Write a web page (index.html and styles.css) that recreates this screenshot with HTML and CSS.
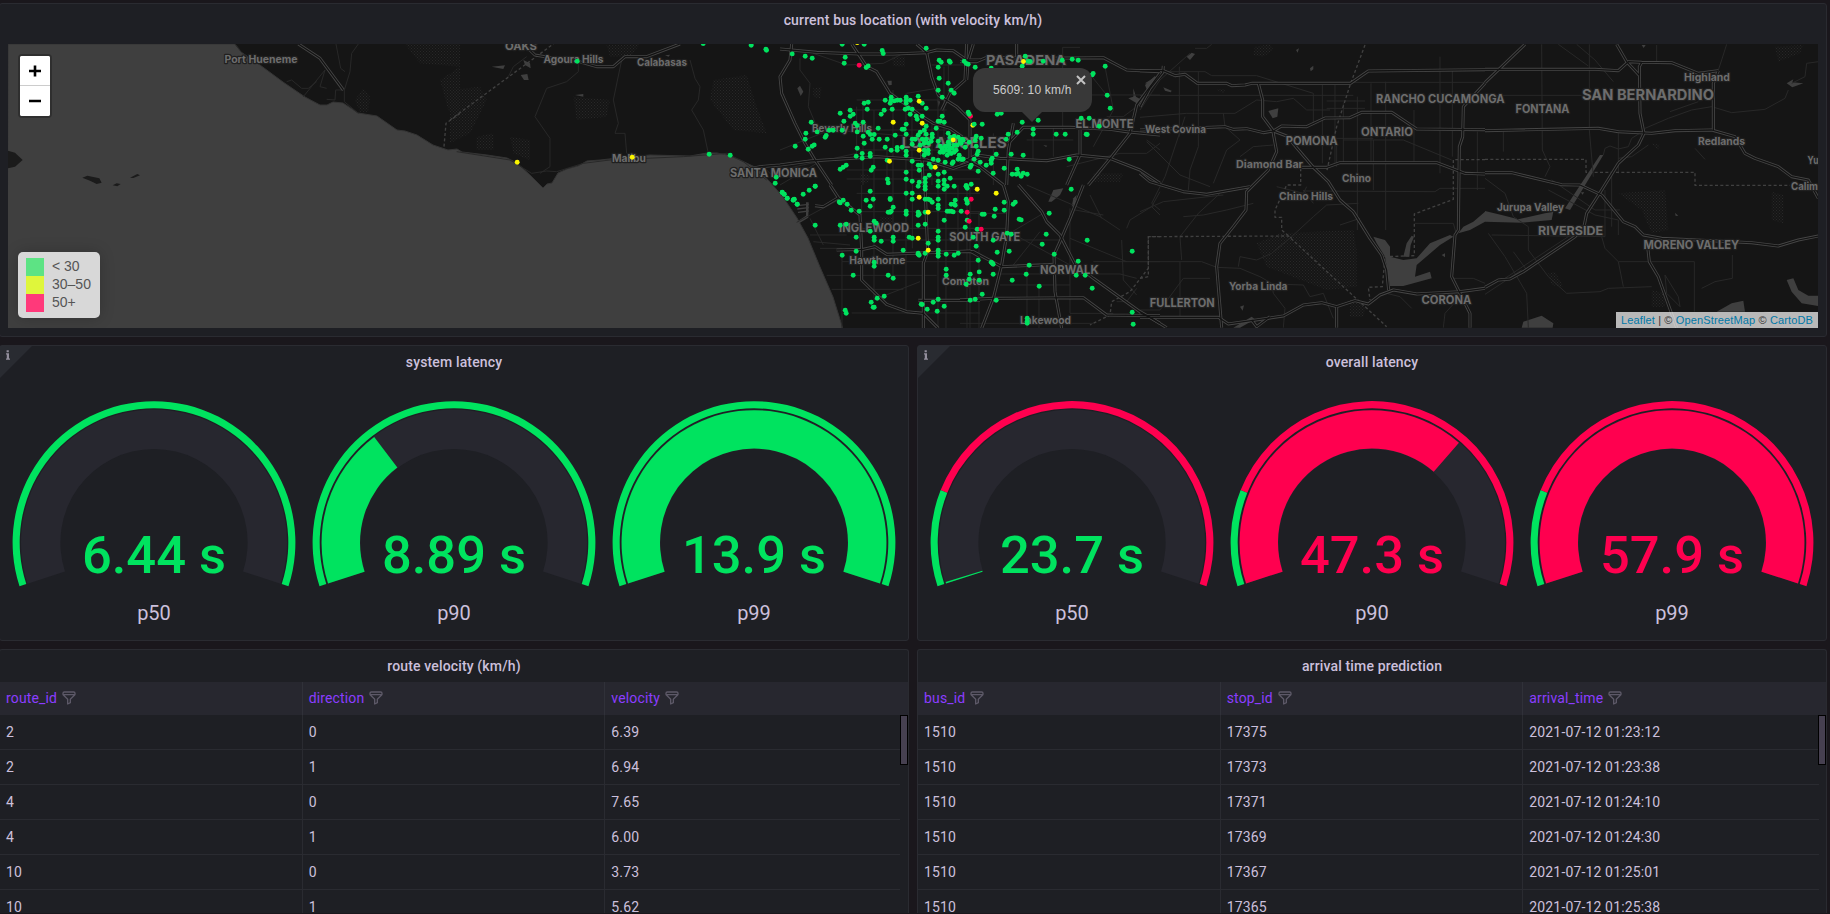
FILE: index.html
```html
<!DOCTYPE html>
<html lang="en">
<head>
<meta charset="utf-8">
<title>Bus dashboard</title>
<link rel="stylesheet" href="styles.css">
</head>
<body>
<svg class="defs" width="0" height="0" aria-hidden="true">
  <symbol id="filter" viewBox="0 0 24 24"><path d="M19,2H5A3,3,0,0,0,2,5V6.17a3,3,0,0,0,.25,1.2l0,.06a2.81,2.81,0,0,0,.59.86L9,14.41V21a1,1,0,0,0,.47.85A1,1,0,0,0,10,22a1,1,0,0,0,.45-.11l4-2A1,1,0,0,0,15,19V14.41l6.12-6.12a2.81,2.81,0,0,0,.59-.86l0-.06A3,3,0,0,0,22,6.17V5A3,3,0,0,0,19,2ZM13.29,13.29A1,1,0,0,0,13,14v4.38l-2,1V14a1,1,0,0,0-.29-.71L5.41,8H18.59ZM20,6H4V5A1,1,0,0,1,5,4H19a1,1,0,0,1,1,1Z"/></symbol>
  <symbol id="info" viewBox="0 0 32 32"><path class="corner-bg" d="M0 0H32L0 32Z"/><path class="corner-i" d="M6.6 4.2h2.2v2H6.6zM6 7.3h3v5.2h1V13.7H6v-1.2h.8v-4H6z"/></symbol>
</svg>
<main class="dashboard">
  <section class="panel">
    <h2 class="panel-title">current bus location (with velocity km/h)</h2>
    <div class="panel-body">
      <div class="map">
        <svg class="map-canvas" id="map" viewBox="8 44 1810 284"></svg>
        <div class="zoom-control">
          <button class="zoom-btn" aria-label="Zoom in"><svg viewBox="0 0 12 12"><path d="M0 6H12M6 .4V11.6"/></svg></button>
          <button class="zoom-btn" aria-label="Zoom out"><svg viewBox="0 0 12 12"><path d="M0 6H12"/></svg></button>
        </div>
        <div class="legend">
          <div class="legend-row"><i class="swatch slow"></i>&lt; 30</div>
          <div class="legend-row"><i class="swatch medium"></i>30–50</div>
          <div class="legend-row"><i class="swatch fast"></i>50+</div>
        </div>
        <div class="popup">5609: 10 km/h<svg class="popup-close" viewBox="0 0 10 10"><path d="M1 1L9 9M9 1L1 9"/></svg></div>
        <div class="attribution"><a>Leaflet</a> | © <a>OpenStreetMap</a> © <a>CartoDB</a></div>
      </div>
    </div>
  </section>
  <div class="row gauges-row">
    <section class="panel">
      <svg class="corner"><use href="#info"/></svg>
      <h2 class="panel-title">system latency</h2>
      <div class="panel-body gauges" data-gauges="6.44,8.89,13.9"></div>
    </section>
    <section class="panel">
      <svg class="corner"><use href="#info"/></svg>
      <h2 class="panel-title">overall latency</h2>
      <div class="panel-body gauges" data-gauges="23.7,47.3,57.9"></div>
    </section>
  </div>
  <div class="row tables-row">
    <section class="panel">
      <h2 class="panel-title">route velocity (km/h)</h2>
      <div class="table">
        <div class="thead"><div class="th">route_id<svg><use href="#filter"/></svg></div><div class="th">direction<svg><use href="#filter"/></svg></div><div class="th">velocity<svg><use href="#filter"/></svg></div></div>
        <div class="tr"><div class="td">2</div><div class="td">0</div><div class="td">6.39</div></div>
        <div class="tr"><div class="td">2</div><div class="td">1</div><div class="td">6.94</div></div>
        <div class="tr"><div class="td">4</div><div class="td">0</div><div class="td">7.65</div></div>
        <div class="tr"><div class="td">4</div><div class="td">1</div><div class="td">6.00</div></div>
        <div class="tr"><div class="td">10</div><div class="td">0</div><div class="td">3.73</div></div>
        <div class="tr"><div class="td">10</div><div class="td">1</div><div class="td">5.62</div></div>
        <div class="scroll-thumb"></div>
      </div>
    </section>
    <section class="panel">
      <h2 class="panel-title">arrival time prediction</h2>
      <div class="table">
        <div class="thead"><div class="th">bus_id<svg><use href="#filter"/></svg></div><div class="th">stop_id<svg><use href="#filter"/></svg></div><div class="th">arrival_time<svg><use href="#filter"/></svg></div></div>
        <div class="tr"><div class="td">1510</div><div class="td">17375</div><div class="td">2021-07-12 01:23:12</div></div>
        <div class="tr"><div class="td">1510</div><div class="td">17373</div><div class="td">2021-07-12 01:23:38</div></div>
        <div class="tr"><div class="td">1510</div><div class="td">17371</div><div class="td">2021-07-12 01:24:10</div></div>
        <div class="tr"><div class="td">1510</div><div class="td">17369</div><div class="td">2021-07-12 01:24:30</div></div>
        <div class="tr"><div class="td">1510</div><div class="td">17367</div><div class="td">2021-07-12 01:25:01</div></div>
        <div class="tr"><div class="td">1510</div><div class="td">17365</div><div class="td">2021-07-12 01:25:38</div></div>
        <div class="scroll-thumb"></div>
      </div>
    </section>
  </div>
</main>
<script src="app.js"></script>
</body>
</html>
```

FILE: styles.css
```css
* { box-sizing: border-box; }
body {
  margin: 0;
  height: 914px;
  overflow: hidden;
  background: #1a171c;
  color: #ccc0dc;
  font: 14px/20px Roboto, "Liberation Sans", sans-serif;
  letter-spacing: .15px;
}
.defs { position: absolute; }
.dashboard {
  display: flex;
  flex-direction: column;
  gap: 8px;
  width: 1828px;
  height: 913px;
  margin-left: -1px;
  padding-top: 3px;
}
.row { display: grid; grid-template-columns: 1fr 1fr; gap: 8px; }
.gauges-row { height: 296px; }
.tables-row { flex: 1; min-height: 0; }
.panel {
  position: relative;
  display: flex;
  flex-direction: column;
  min-width: 0;
  min-height: 0;
  border: 1px solid #2a2b31;
  border-radius: 3px;
  background: #1e1f24;
}
.tables-row .panel { border-bottom: 0; border-radius: 3px 3px 0 0; overflow: hidden; }
.panel-title {
  flex: none;
  margin: 0;
  height: 32px;
  font-size: 14px;
  font-weight: 500;
  line-height: 32px;
  text-align: center;
}
.panel-body { padding: 8px; }
.corner { position: absolute; top: 0; left: 0; width: 32px; height: 32px; }
.corner-bg { fill: #292b31; }
.corner-i { fill: #928e9c; }

/* Map */
.map { position: relative; height: 284px; overflow: hidden; background: #151515; letter-spacing: 0; }
.map-canvas { display: block; width: 100%; height: 100%; }
.water { fill: #3f3f3f; stroke: #343434; stroke-width: 1; }
.island { fill: #1b1b1b; }
.lake { fill: #3f3f3f; }
.wood { fill: url(#woodDots); }
.minor, .highway, .core, .border { fill: none; stroke-linejoin: round; }
.minor { stroke: #282828; stroke-width: 3; }
.highway { stroke: #464646; stroke-width: 9; }
.core { stroke: #121212; stroke-width: 3.8; }
.border { stroke: #404040; stroke-width: 4; stroke-dasharray: 9 7; }
.place {
  fill: #6d6d6d;
  stroke: #202020;
  stroke-width: 2.4px;
  stroke-linejoin: round;
  paint-order: stroke;
  font-family: Inter, "Open Sans", sans-serif;
  font-weight: 700;
}
.bus-slow { fill: #00e35f; }
.bus-medium { fill: #fbf500; }
.bus-fast { fill: #ff004f; }
.zoom-control {
  position: absolute;
  top: 10px;
  left: 10px;
  border: 2px solid rgba(0, 0, 0, .25);
  border-radius: 4px;
  background: #fff;
  background-clip: padding-box;
  overflow: hidden;
}
.zoom-btn {
  display: flex;
  align-items: center;
  justify-content: center;
  width: 30px;
  height: 30px;
  padding: 0;
  border: 0;
  background: #fff;
}
.zoom-btn:first-child { border-bottom: 1px solid #ccc; }
.zoom-btn svg { width: 12px; height: 12px; stroke: #000; stroke-width: 2.6; }
.legend {
  position: absolute;
  left: 10px;
  bottom: 10px;
  width: 82px;
  height: 66px;
  padding: 6px 8px;
  border-radius: 5px;
  background: rgba(255, 255, 255, .8);
  box-shadow: 0 0 15px rgba(0, 0, 0, .2);
  color: #555;
  font: 14px/17px "Liberation Sans", Arial, sans-serif;
}
.legend-row { display: flex; gap: 8px; height: 18px; white-space: nowrap; }
.swatch { width: 18px; height: 18px; }
.slow { background: #5de384; }
.medium { background: #dff63b; }
.fast { background: #ff397a; }
.popup {
  position: absolute;
  left: 965px;
  top: 24px;
  width: 119px;
  height: 44px;
  padding: 14px 0 0 20px;
  border-radius: 12px;
  background: #383838;
  color: #ccc;
  font: 12px/17px "Liberation Sans", Arial, sans-serif;
  letter-spacing: .2px;
}
.popup::after {
  content: "";
  position: absolute;
  top: 43px;
  left: 48px;
  border: 11px solid transparent;
  border-top: 11px solid #383838;
  border-bottom: 0;
}
.popup-close {
  position: absolute;
  top: 7px;
  right: 6px;
  width: 10px;
  height: 10px;
  stroke: #c3c3c3;
  stroke-width: 2;
}
.attribution {
  position: absolute;
  right: 0;
  bottom: 0;
  width: 202px;
  height: 16px;
  text-align: center;
  background: rgba(255, 255, 255, .7);
  color: #333;
  font: 11px/17px "Liberation Sans", Arial, sans-serif;
  letter-spacing: .14px;
  white-space: nowrap;
}
.attribution a { color: #0078a8; }

/* Gauges */
.gauges { display: grid; grid-template-columns: repeat(3, 292px); gap: 8px; letter-spacing: 0; }
.gauge { display: block; width: 292px; height: 246px; }
.track { fill: #27272f; }
.ok { fill: #00e35f; }
.bad { fill: #ff004f; }
.gauge-value { font-size: 52.5px; font-weight: 500; text-anchor: middle; }
.gauge-label { fill: #ccc0dc; font-size: 20px; text-anchor: middle; }

/* Tables */
.table { position: relative; flex: 1; min-height: 0; }
.thead, .tr { display: grid; grid-template-columns: 302.67px 302.67px 1fr; }
.thead { height: 33px; background: #27272f; color: #8b3dff; }
.tr { width: 900px; height: 35px; border-bottom: 1px solid #2a2b31; }
.panel:last-child .tr { width: 901px; }
.th, .td { display: flex; align-items: center; padding: 0 6px; border-right: 1px solid #2a2b31; }
.th { padding-bottom: 1px; border-right-color: #303139; }
.th:last-child, .td:last-child { border-right: 0; }
.th svg { width: 16px; height: 16px; margin-left: 4px; fill: #5d5968; }
.scroll-thumb {
  position: absolute;
  top: 33px;
  right: 0;
  width: 8px;
  height: 50px;
  border: 1px solid #000;
  background: #464050;
}
```

FILE: app.js
```js
// Each tile holds features on a grid of a third of a map pixel, offset by its origin.
const tiles = [
  { at: [0, 0],
    highways: ["895,132 960,175 1030,270"],
    minor: ["1075,132 1055,160 1050,215 1033,270 1033,305 1075,340", "1008,132 1022,205 1035,215", "860,245 875,240 905,265 925,265 950,245", "910,290 975,210 960,260 980,265", "980,298 1005,300 1007,270 1030,270", "705,132 720,150"],
    borders: ["1332,440 1338,370 1380,340"],
    woods: ["1215,132 1380,132 1380,200 1260,190", "1065,300 1090,265 1110,290 1105,335 1080,335", "1320,240 1380,200 1380,350 1345,330"],
    islands: ["24,452 45,458 68,480 45,500 24,505", "247,533 262,527 298,535 305,548 290,552 270,542", "338,556 350,550 362,552 352,559", "390,533 412,522 420,526 400,534"] },
  { at: [450, 0],
    highways: ["220,132 255,165 330,178 370,180 440,200 490,200 525,170 590,170 690,132"],
    minor: ["515,180 490,300 505,370 495,400 525,400 530,460", "385,180 385,215 350,245 290,265 255,350 300,415 300,500 270,520", "720,180 735,235 750,260 745,300 725,330 760,390 775,460", "20,455 180,480 245,520 290,513 320,515 400,490 480,480 700,470 830,460 880,485 950,540", "230,170 190,200 175,230", "950,510 970,530 1005,530"],
    borders: ["0,360 310,132"],
    lakes: ["212,225 232,222 236,240 222,240", "125,200 165,196 160,207 140,203", "220,180 240,190 242,205 225,195", "375,285 400,282 400,290", "645,166 660,164 656,170"],
    woods: ["0,270 90,260 110,300 60,400 0,430", "370,290 480,300 470,350 380,360", "790,240 890,225 920,320 950,400 850,390 780,300", "470,135 570,132 540,170 480,170", "80,410 130,400 130,450 80,450", "180,410 240,420 240,480 190,460"] },
  { at: [780, 40],
    highways: ["35,12 30,60 0,110 5,160 45,250 75,310 105,360 155,435", "0,27 110,37 240,42 340,42 440,38 470,30 520,32 560,60 600,60", "215,12 260,80 290,95 330,160 420,225 460,250 510,265 560,300", "410,12 440,38 455,110 475,165 530,200 570,240 570,290 570,380", "560,12 555,120 510,160 485,210", "-150,400 -60,380 0,375 90,363 290,350 440,360 520,385 600,358", "440,250 425,340 430,435"],
    minor: ["60,55 60,90 90,130 85,200 110,260", "100,40 200,75 310,70 370,40", "230,200 230,360", "249,180 249,435", "282,210 282,435", "321,330 321,435", "339,150 339,435", "378,160 378,435", "396,180 396,435", "456,250 456,435", "474,150 474,435", "492,80 492,435", "200,210 500,210", "230,180 500,180", "200,270 500,270", "0,330 150,270 500,297", "230,330 500,330", "0,390 230,340", "200,390 600,390", "200,417 600,417", "380,160 470,145", "455,75 560,75", "505,60 505,160", "0,435 110,370"],
    lakes: ["52,145 60,137 70,155 62,168", "322,122 335,122 335,135 326,136", "472,180 480,185 476,202"],
    woods: ["100,145 125,142 120,175 100,170", "335,50 375,50 375,80 340,78", "240,400 270,405 265,430 240,430"] },
  { at: [960, 40],
    highways: ["0,65 50,65 80,52 240,55 430,53 500,90 600,95", "170,12 170,52", "40,12 25,60 20,120", "600,100 530,195 510,280 455,350 385,435", "145,310 190,262 330,262 450,268 500,275 600,285", "0,370 50,345 120,355 260,362 350,345 450,355 540,390 600,430", "160,250 145,330 140,435", "0,350 60,380 130,435", "360,270 360,345 320,435"],
    minor: ["308,22 308,270", "250,165 600,165", "308,22 360,22", "435,80 460,210 400,320", "560,300 600,330", "219,260 219,360", "380,90 440,165", "100,280 100,435", "530,200 490,230 440,230", "320,380 480,340 560,340 600,310", "200,300 340,300", "280,260 280,350"],
    lakes: ["555,130 590,108 600,112 575,135", "505,175 520,170 520,145 528,170 545,180 530,190", "250,315 262,317 258,321"],
    woods: ["400,400 490,400 480,425 400,425"] },
  { at: [780, 185],
    highways: ["150,0 175,38 240,90 245,195 245,285 320,358 380,380 430,385 475,430", "175,38 130,65 105,62", "170,195 250,193 285,185 320,208 400,205 570,198 600,215", "435,0 443,200 430,235 430,430", "415,346 600,346"],
    minor: ["50,112 175,45", "90,100 130,180", "120,190 186,190 186,430", "245,0 245,90", "282,0 282,340", "339,0 339,270", "378,0 378,380", "397,0 397,190", "474,0 474,430", "498,0 498,430", "534,0 534,200", "561,0 561,430", "230,25 600,25", "230,80 600,80", "175,130 600,130", "280,165 600,165", "186,230 600,230", "140,271 470,271", "155,313 370,313", "215,384 600,384", "280,345 420,290", "90,150 200,150", "100,170 210,180"],
    lakes: ["48,112 78,92 78,52 86,52 85,98 60,113", "52,60 86,56 86,60 52,64", "52,70 86,66 86,70 52,74", "54,80 86,76 86,80 54,84"],
    woods: ["300,95 340,95 335,110 300,110"] },
  { at: [960, 185],
    highways: ["130,0 145,50 140,150 125,240 100,340 65,430", "0,200 40,200 125,245 285,238", "175,0 245,80 260,110 300,150 345,238 400,280 540,380 600,415", "370,0 330,100 300,170 282,210 285,320 305,430", "0,345 100,340 370,338 440,390 600,392"],
    minor: ["140,150 250,85", "200,0 420,95 480,135", "345,75 430,90", "500,130 510,105 575,65 600,20", "390,30 425,100", "575,65 600,90", "485,165 490,285 530,330", "330,70 330,385", "30,0 30,430", "57,80 57,430", "201,240 201,430", "237,300 237,430", "0,85 145,85", "0,130 140,130", "140,165 300,165", "100,267 480,267 530,280", "120,300 330,300", "330,385 460,385", "0,415 400,415", "165,150 330,240", "160,240 240,140", "330,160 500,230", "400,230 600,230", "530,310 500,350 470,350"],
    borders: ["600,155 565,155 565,250 510,320 455,350 450,390 390,420"],
    lakes: ["265,50 280,15 310,10 300,30 275,50", "350,30 345,60 335,65 340,40"] },
  { at: [1140, 30],
    highways: ["0,122 70,122 105,137 135,133 172,160 260,160 275,167 315,165 335,160 632,160 685,123 1035,119", "0,230 30,175 68,128 70,108", "355,160 368,210 368,260 398,300 410,365 385,420 320,485 318,540 280,590 240,640 230,710 245,893", "0,300 255,290 280,298 320,296 370,308 400,303 425,288 500,290 555,264 630,263 665,247 755,247 830,297 1035,299", "400,303 440,318 520,412 565,455 600,510 640,545 690,625 725,675 740,720 746,780", "485,412 560,412 600,398 890,398 975,430 1035,432", "0,430 30,455 130,485 200,493 330,470", "0,862 235,862 265,882 430,858 490,825 545,818 590,830 645,812 685,822 720,795 760,780 830,792 960,785 1035,775", "0,848 30,862 80,893", "590,832 590,893", "1035,160 970,230 968,320 958,350 955,600 945,615 935,740 990,850 990,893", "335,870 350,890 390,860"],
    minor: ["118,110 118,320", "175,125 175,350 150,420 145,480", "70,125 195,125 215,137 350,137 520,190 520,285", "0,196 640,196", "640,157 1035,157", "0,262 140,250 285,250 350,210 410,215 460,205 500,240 570,240", "547,165 547,400", "585,165 585,400", "610,220 610,400", "652,200 652,600", "693,160 693,395", "737,155 737,600", "822,240 822,395", "900,80 900,430", "937,120 937,380", "1012,305 1012,480", "610,330 790,330 935,390", "490,483 885,485 900,475 1035,475", "655,520 560,525 520,560 455,620 395,670 350,690 300,680 295,710", "0,695 185,695 230,712 300,715 360,740 395,760 400,790 435,835 430,893", "0,545 70,515 250,495", "125,690 120,620 175,550 240,490", "20,335 120,435 210,470", "395,762 490,765 510,800 550,790 580,865", "740,790 780,800 815,835", "825,580 940,580 950,615", "0,840 60,840 130,745 210,745", "120,695 120,860", "910,893 915,850 960,800", "940,745 1000,745 1035,760", "150,70 60,150 0,240", "165,55 200,55 215,43", "60,540 35,520 75,440 135,260", "250,250 255,290 300,330 260,360 220,460", "300,380 340,350 400,345", "130,560 190,555 260,540 340,520", "520,520 490,480", "410,470 490,490 500,470", "560,213 675,213", "560,235 675,235", "590,340 590,410", "570,325 700,325", "700,330 700,480", "600,585 660,565"],
    borders: ["675,45 632,160 590,290 560,425", "0,745 25,740 25,620 445,618 740,890", "482,415 482,465 440,465 405,540 405,562 425,562 425,600 455,625", "1035,389 940,389 940,508 823,552 823,677 735,680 727,770 685,772 690,810"],
    lakes: ["700,620 735,630 750,650 750,680 790,690 830,685 870,640 930,615 940,620 900,645 830,705 825,740 870,725 875,745 790,768 750,768 742,720 735,680 710,640", "955,610 970,590 1000,575 1035,545 1035,575 990,600", "790,680 800,640 815,617 822,620 812,645 808,680", "385,243 415,235 412,260 398,265", "15,165 45,138 45,150 20,178", "70,172 95,182 92,187 75,182", "140,80 155,68 165,72 150,90", "510,115 520,107 520,118 512,124", "905,675 915,670 915,682", "280,893 335,860 345,868 300,893", "300,830 312,826 308,842", "468,60 477,55 473,68"],
    woods: ["350,640 420,610 640,600 650,660 650,770 560,780 380,710", "345,50 390,43 400,60 370,80 340,75", "630,810 680,820 670,860 630,860", "230,178 255,178 250,192"] },
  { at: [1485, 30],
    highways: ["0,118 330,118 400,122 430,95 470,97 560,98 640,130 700,122", "0,158 120,43", "395,43 425,95 462,135", "470,97 463,110 465,250 477,310 460,345 400,400 350,480 305,550 297,590 270,620 115,725 75,747 40,750 0,772", "0,302 340,295 400,305 500,310 570,302 680,300 750,320 780,370 810,385 880,410 920,440 970,450 1000,505", "685,300 685,160 700,122", "0,428 80,428 230,464 285,465 350,495 415,575 450,590 475,615 530,625 800,638 880,648 940,630 1000,618", "488,650 493,695 520,740 575,893"],
    minor: ["170,43 172,360 195,410 180,440", "313,43 313,300 325,440", "55,305 55,365", "220,43 310,108", "515,45 515,95", "0,196 290,196", "0,445 60,490 85,560 130,590 130,660 190,740 245,790 345,785 370,775 500,770", "350,620 360,655 400,695 415,770", "400,695 628,695 628,845", "742,675 742,745 690,755 650,775", "10,610 60,680 125,790 130,893", "20,615 360,620", "360,480 360,620", "380,430 380,590", "400,310 400,430", "490,345 440,380 400,385", "630,355 660,388", "540,735 580,800 585,830 545,790 540,735", "200,450 330,540 405,540", "190,480 330,555 400,570 400,615", "60,745 280,600", "85,665 125,720", "0,793 110,720", "555,245 640,215", "700,120 710,90 725,43", "275,43 330,90 385,155", "480,295 550,265 620,240 680,230 740,248 840,238 900,205 910,180", "1000,95 965,100 960,140 920,160", "355,375 360,355 375,348 400,357 430,350 440,325 480,300"],
    borders: ["0,388 303,388 303,427 630,427 630,466 915,466"],
    lakes: ["240,535 345,375 355,375 255,540", "0,543 50,555 100,568 180,550 205,545 200,570 110,578 0,575", "110,893 115,875 170,857 205,880 203,893", "695,845 740,820 775,812 780,845", "905,750 925,745 940,780 970,797 1000,797 1000,828 950,820 920,785", "905,160 925,148 922,157 955,160 922,172", "570,548 580,557 572,558", "470,45 482,45 476,54", "288,487 298,487 292,494", "835,845 860,850 880,846"],
    woods: ["400,490 540,480 550,600 500,610 470,540", "860,485 895,495 895,580 860,570", "190,730 210,725 235,770 200,765", "500,780 540,790 540,830 500,830", "500,340 525,345 520,360", "870,50 955,45 945,70 880,95"] }
];

const coast = "8,44 235,44 241,52 260,65 283,82 305,97 320,105 327,105 333,102 343,103 358,113 377,116 397,130 405,131 417,135 433,145 448,150 457,149 462,152 487,155 507,158 517,163 530,175 543,188 547,184 552,183 558,173 567,169 578,166 587,161 600,160 627,157 650,155 690,156 707,153 717,153 727,155 740,160 757,168 770,182 783,197 797,218 808,238 820,267 833,297 843,329 7,329";

// name, x, baseline, width, font size
const places = [
  ["Port Hueneme", 224.5, 63, 73, 10.5], ["OAKS", 505, 49.5, 32, 11], ["Agoura Hills", 543.5, 63.3, 60, 10.5], ["Calabasas", 637, 66, 50, 10.5],
  ["Malibu", 612, 162, 34, 10.5], ["SANTA MONICA", 730, 176.5, 87, 11.5], ["Beverly Hills", 812, 132, 60, 10.5], ["LOS ANGELES", 901.7, 147.5, 105, 15],
  ["PASADENA", 986, 65, 80, 13.5], ["EL MONTE", 1075.5, 128, 58, 11.5], ["INGLEWOOD", 839, 232, 70, 11.5], ["SOUTH GATE", 949.3, 241, 71, 11.5],
  ["Hawthorne", 849.3, 264, 56, 10.5], ["Compton", 942, 285.3, 47, 10.5], ["NORWALK", 1040, 273.5, 58.5, 11.5], ["Lakewood", 1020, 324, 51, 10.5],
  ["FULLERTON", 1149.7, 307, 65, 11.5], ["West Covina", 1145, 133, 61, 10.5], ["POMONA", 1285.7, 145, 52, 11.5], ["Diamond Bar", 1236, 168, 67, 10.5],
  ["Chino", 1342, 182, 29, 10.5], ["Chino Hills", 1279, 200, 54, 10.5], ["ONTARIO", 1361, 136, 52, 11.5], ["RANCHO CUCAMONGA", 1376, 103.2, 128.5, 11.5],
  ["FONTANA", 1515.5, 113, 54, 11.5], ["SAN BERNARDINO", 1582, 99.7, 132, 14.5], ["Highland", 1684, 80.5, 46, 10.5], ["Redlands", 1698, 144.5, 47, 10.5],
  ["Yu", 1807.5, 164, 11, 10.5], ["Calim", 1791, 190, 27, 10.5], ["Jurupa Valley", 1497, 211, 67, 10.5], ["RIVERSIDE", 1538, 235, 65, 11.5],
  ["MORENO VALLEY", 1643.5, 248.5, 95.5, 11.5], ["Yorba Linda", 1229, 290, 58.5, 10.5], ["CORONA", 1421.5, 303.5, 50, 11.5]
];

const buses = [
  ["fast", 960, 40, "31,228"],
  ["slow", 450, 0, "759,130 903,135 947,147 949,150 381,183 777,462 840,465 978,531 975,549 996,576 1002,582 1011,594 1029,600 1032,598 1041,612"],
  ["slow", 780, 40, "186,12 252,12 438,24 36,41 75,48 96,54 195,51 192,69 306,31 309,40 258,82 264,77 477,60 483,66 474,81 507,62 510,66 477,114 504,129 474,150 513,150 522,159 486,171 333,171 333,180 330,189 342,182 351,180 360,180 315,180 378,171 378,180 378,189 375,207 384,204 396,207 414,168 426,189 438,204 390,180 252,189 264,186 261,207 312,210 303,222 336,207 210,210 219,222 210,228 180,219 191,243 186,270 93,246 111,275 147,270 159,270 138,286 135,291 77,279 75,297 45,318 84,327 96,318 102,314 225,249 231,256 249,246 231,275 249,288 264,276 270,283 282,283 276,297 252,309 297,297 294,264 231,324 228,348 246,340 246,354 270,340 270,348 315,321 333,330 351,330 351,322 366,321 378,333 378,345 321,297 345,285 366,267 372,267 378,252 378,282 408,228 390,222 411,237 426,228 438,258 432,270 438,282 420,276 414,285 396,297 405,297 396,312 426,297 438,297 432,309 456,282 456,291 453,303 444,309 420,315 468,264 474,243 480,243 492,246 486,228 504,279 510,291 522,288 516,300 534,291 540,300 504,306 495,318 486,324 480,336 489,336 498,330 510,324 522,315 531,315 513,340 522,336 528,330 501,345 498,318 507,312 516,324 486,330 507,333 543,309 549,300 534,357 543,357 549,357 537,345 495,366 516,370 519,365 474,360 459,357 474,303 432,330 438,336 444,330 432,345 444,340 480,318 180,387 189,381 198,375 273,390 279,381 321,360 378,396 396,363 414,375 423,375 417,390 447,372 453,381 492,396 474,402 378,417 396,423 417,426 435,414 447,405 435,426 322,417 324,428 474,423 492,420 510,414 492,432 105,438"],
  ["slow", 960, 40, "12,63 24,72 18,70 45,81 93,84 195,48 186,78 204,63 210,64 249,63 306,60 336,57 354,60 435,78 399,100 396,104 441,165 450,204 363,234 387,234 417,258 186,246 234,240 219,267 219,282 288,282 315,282 378,282 381,283 171,276 144,282 138,297 24,216 27,222 111,222 123,219 66,252 48,288 45,300 63,294 6,297 0,306 15,321 27,306 48,318 54,333 51,342 42,357 60,366 33,375 30,381 54,393 78,375 93,369 93,360 96,354 108,342 153,342 189,345 99,399 132,384 171,387 156,402 168,402 174,400 183,408 189,399 201,402 327,357 6,357 33,432 18,436"],
  ["slow", 780, 185, "6,22 12,27 21,39 39,44 42,42 51,57 69,27 87,15 105,3 105,120 180,120 198,117 177,50 180,53 189,45 201,57 213,75 237,78 258,45 279,42 270,18 270,63 330,40 330,43 339,66 324,81 330,81 333,78 378,24 396,24 396,42 378,78 378,87 414,3 435,3 435,12 435,42 444,42 450,44 456,51 414,81 417,87 414,90 435,81 474,3 474,42 474,60 474,70 492,12 501,3 522,3 513,57 522,57 525,45 525,60 501,78 507,78 513,78 519,80 543,78 558,3 558,42 561,48 561,54 492,105 414,120 435,117 474,138 474,156 474,165 444,174 282,108 288,114 270,138 282,156 282,165 303,168 339,156 339,168 228,156 228,198 186,210 387,156 396,159 369,195 219,270 282,231 282,243 324,270 339,279 291,339 312,333 273,351 282,366 279,366 195,375 198,384 414,204 414,207 417,210 435,204 474,195 474,204 474,213 498,207 522,210 534,204 498,252 498,270 474,342 459,351 492,363 471,378 423,357 426,358 441,372 555,126 561,105 570,267 567,282 558,297 579,156 588,183 594,225 597,260 597,285 570,345 585,342"],
  ["slow", 960, 185, "333,12 18,3 21,9 132,51 159,57 165,51 105,72 132,75 102,93 66,87 72,87 267,84 177,102 183,104 51,132 99,165 141,144 153,147 246,177 258,147 381,165 516,198 111,201 147,198 282,207 93,231 96,234 99,237 207,240 198,267 99,267 156,285 237,303 348,270 375,270 354,228 396,309 516,381 519,417 66,327 108,345 201,399 201,408 201,414"],
  ["medium", 450, 0, "201,486 546,471"],
  ["medium", 780, 40, "417,183 339,246 426,249 417,330 465,381 328,363 519,299 231,7"],
  ["medium", 960, 40, "190,64 38,255"],
  ["medium", 780, 185, "591,12 417,36 444,81 414,159 444,195"],
  ["medium", 960, 185, "108,24"],
  ["fast", 780, 40, "237,75"],
  ["fast", 780, 185, "573,42 561,81 567,108"],
  ["fast", 960, 185, "63,132"],
  ["slow", 960, 40, "42,252"]
];

const layer = (key, cls, tag) => tiles.map(t =>
  `<g transform="translate(${t.at}) scale(.33333)">` +
  (t[key] || []).map(p => `<${tag} class="${cls}" points="${p}"/>`).join("") + "</g>").join("");

document.getElementById("map").innerHTML =
  '<defs><pattern id="woodDots" width="3" height="3" patternUnits="userSpaceOnUse" patternTransform="scale(3)"><rect width="1" height="1" fill="#282828"/><rect x="1.5" y="1.5" width="1" height="1" fill="#282828"/></pattern></defs>' +
  layer("woods", "wood", "polygon") +
  `<polygon class="water" points="${coast}"/>` +
  layer("islands", "island", "polygon") +
  layer("lakes", "lake", "polygon") +
  layer("minor", "minor", "polyline") +
  layer("borders", "border", "polyline") +
  layer("highways", "highway", "polyline") +
  layer("highways", "core", "polyline") +
  places.map(([name, x, y, w, size]) => `<text class="place" x="${x}" y="${y}" textLength="${w}" lengthAdjust="spacingAndGlyphs" font-size="${size}">${name}</text>`).join("") +
  buses.map(([speed, ox, oy, list]) => list.split(" ").map(p => {
    const [x, y] = p.split(",").map(Number);
    return `<circle class="bus-${speed}" cx="${(ox + x / 3 + .2).toFixed(1)}" cy="${(oy + y / 3 + .2).toFixed(1)}" r="2.45"/>`;
  }).join("")).join("");

// Gauges sweep 216 degrees; fractions 0..1 map onto that sweep.
const LIMIT = 30;
const point = (r, f) => {
  const a = (162 + 216 * f) * Math.PI / 180;
  return `${(r * Math.cos(a)).toFixed(2)} ${(r * Math.sin(a)).toFixed(2)}`;
};
const band = (cls, outer, inner, from, to) => {
  const large = (to - from) * 216 > 180 ? 1 : 0;
  return `<path class="${cls}" d="M${point(outer, from)}A${outer} ${outer} 0 ${large} 1 ${point(outer, to)}L${point(inner, to)}A${inner} ${inner} 0 ${large} 0 ${point(inner, from)}Z"/>`;
};
for (const el of document.querySelectorAll("[data-gauges]")) {
  const values = el.dataset.gauges.split(",");
  const min = +values[0], max = +values[2];
  const split = Math.min(1, (LIMIT - min) / (max - min));
  el.innerHTML = values.map((v, i) => {
    const cls = +v < LIMIT ? "ok" : "bad";
    const f = (v - min) / (max - min);
    const fill = f || (max > LIMIT ? 0.003 : 0);
    return '<svg class="gauge" viewBox="-146 -156.6 292 246">' +
      band("ok", 141.4, 134.3, 0, split) +
      (split < 1 ? band("bad", 141.4, 134.3, split, 1) : "") +
      band("track", 133, 93.6, 0, 1) +
      (fill ? band(cls, 132.4, 94, 0, fill) : "") +
      `<text class="gauge-value ${cls}" x="0" y="30.4">${v} s</text>` +
      `<text class="gauge-label" x="0" y="77.4">${["p50", "p90", "p99"][i]}</text></svg>`;
  }).join("");
}
```
